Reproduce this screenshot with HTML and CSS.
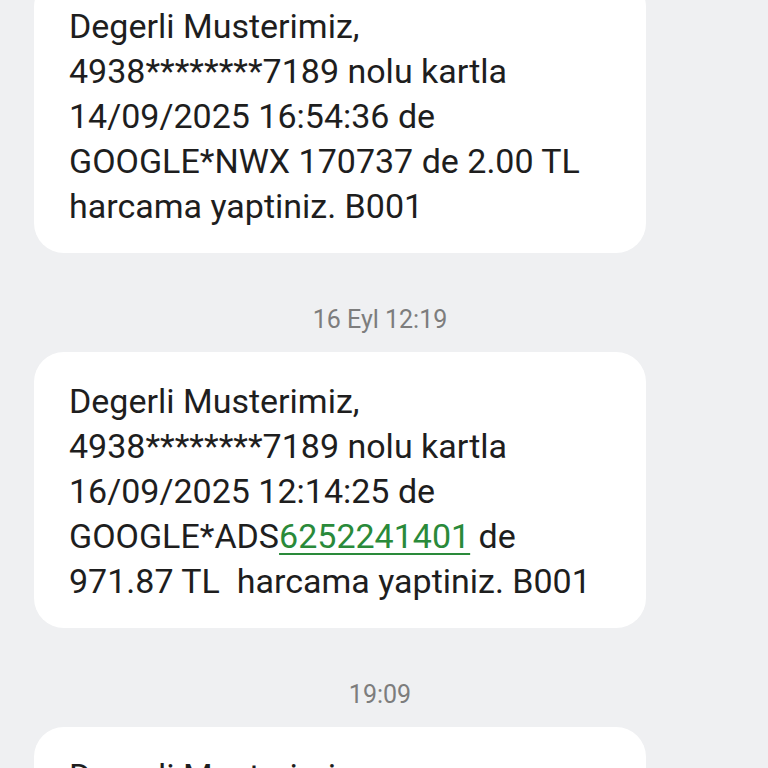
FILE: index.html
```html
<!DOCTYPE html>
<html lang="tr">
<head>
  <meta charset="UTF-8" />
  <meta name="viewport" content="width=device-width, initial-scale=1.0" />
  <title>Mesajlar</title>
  <link rel="stylesheet" href="styles.css">
</head>
<body>
  <div class="thread">
    <div class="bubble">
      Degerli Musterimiz,<br>
      4938********7189 nolu kartla<br>
      14/09/2025 16:54:36 de<br>
      GOOGLE*NWX 170737 de 2.00 TL<br>
      harcama yaptiniz. B001
    </div>
    <div class="stamp">16 Eyl 12:19</div>
    <div class="bubble">
      Degerli Musterimiz,<br>
      4938********7189 nolu kartla<br>
      16/09/2025 12:14:25 de<br>
      GOOGLE*ADS<a class="link" href="#">6252241401</a> de<br>
      971.87 TL&nbsp; harcama yaptiniz. B001
    </div>
    <div class="stamp">19:09</div>
    <div class="bubble">
      Degerli Musterimiz,<br>
      4938********7189 nolu kartla
    </div>
  </div>
</body>
</html>
```

FILE: styles.css
```css
body {
  margin: 0;
  background: #eff0f2;
  font-family: Roboto, 'Noto Sans', sans-serif;
  color: #1e1e1e;
  overflow: hidden;
}
.thread {
  display: flex;
  flex-direction: column;
  margin-top: -23px;
}
.bubble {
  width: 577px;
  margin-left: 34px;
  padding: 27px 0 24px 35px;
  background: #fff;
  border-radius: 30px;
  font-size: 34px;
  line-height: 45px;
}
.link {
  color: #2a8a3a;
  text-decoration: underline;
  text-underline-offset: 5px;
  text-decoration-thickness: 2px;
}
.stamp {
  margin: 55px 0 20px;
  padding-right: 8px;
  text-align: center;
  font-size: 25px;
  line-height: 24px;
  color: #7d7d7d;
}
```
